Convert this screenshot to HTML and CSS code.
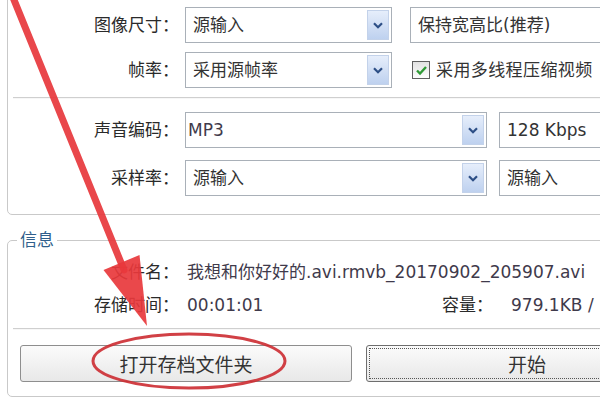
FILE: index.html
```html
<!DOCTYPE html>
<html lang="zh-CN">
<head>
	<meta charset="UTF-8">
	<meta name="viewport" content="width=device-width, initial-scale=1.0">
	<title>视频转换</title>
	<link rel="stylesheet" href="styles.css">
</head>
<body>
	<div class="window">
		<div class="group group-video">
			<div class="rows">
				<div class="row">
					<span class="label">图像尺寸：</span>
					<div class="select select-short">
						<span class="select-text">源输入</span>
						<span class="drop"><svg width="10" height="7" viewBox="0 0 10 7"><path d="M1 1.2 L5 5.2 L9 1.2" fill="none" stroke="#2d4f86" stroke-width="2.2"/></svg></span>
					</div>
					<div class="select field field-top"><span class="select-text">保持宽高比(推荐)</span></div>
				</div>
				<div class="row">
					<span class="label">帧率：</span>
					<div class="select select-short">
						<span class="select-text">采用源帧率</span>
						<span class="drop"><svg width="10" height="7" viewBox="0 0 10 7"><path d="M1 1.2 L5 5.2 L9 1.2" fill="none" stroke="#2d4f86" stroke-width="2.2"/></svg></span>
					</div>
					<label class="check">
						<span class="check-box"><svg width="13" height="11" viewBox="0 0 13 11"><path d="M2 5.5 L5 8.5 L11 2" fill="none" stroke="#2f9a36" stroke-width="2.4"/></svg></span>
						<span>采用多线程压缩视频</span>
					</label>
				</div>
			</div>
			<div class="sep"></div>
			<div class="rows rows-audio">
				<div class="row">
					<span class="label">声音编码：</span>
					<div class="select select-long">
						<span class="select-text value">MP3</span>
						<span class="drop"><svg width="10" height="7" viewBox="0 0 10 7"><path d="M1 1.2 L5 5.2 L9 1.2" fill="none" stroke="#2d4f86" stroke-width="2.2"/></svg></span>
					</div>
					<div class="select field"><span class="select-text">128 Kbps</span></div>
				</div>
				<div class="row">
					<span class="label">采样率：</span>
					<div class="select select-long">
						<span class="select-text">源输入</span>
						<span class="drop"><svg width="10" height="7" viewBox="0 0 10 7"><path d="M1 1.2 L5 5.2 L9 1.2" fill="none" stroke="#2d4f86" stroke-width="2.2"/></svg></span>
					</div>
					<div class="select field"><span class="select-text">源输入</span></div>
				</div>
			</div>
		</div>

		<fieldset class="group group-info">
			<legend>信息</legend>
			<div class="info-row">
				<span class="label">文件名：</span>
				<span class="value">我想和你好好的.avi.rmvb_20170902_205907.avi</span>
			</div>
			<div class="info-row">
				<span class="label">存储时间：</span>
				<span class="value time">00:01:01</span>
				<span class="size-label">容量：</span>
				<span class="value">979.1KB / 1.2MB</span>
			</div>
			<div class="sep sep-info"></div>
			<div class="buttons">
				<button class="btn btn-open">打开存档文件夹</button>
				<button class="btn btn-start">开始</button>
			</div>
		</fieldset>

		<!-- annotation drawn over the screenshot -->
		<svg class="marks" width="600" height="400" viewBox="0 0 600 400">
			<line x1="12" y1="-5" x2="124" y2="270" stroke="#e8383c" stroke-width="7" stroke-linecap="round" opacity="0.92"/>
			<polygon points="147,326 139.5,255 103.5,270" fill="#e8383c" opacity="0.92"/>
			<ellipse cx="189" cy="361" rx="96" ry="27" fill="none" stroke="#cc2b31" stroke-width="3" opacity="0.9"/>
		</svg>
	</div>
</body>
</html>
```

FILE: styles.css
```css
body {
	margin: 0;
	background: #fff;
	font-family: "DejaVu Sans", "Noto Sans CJK SC", sans-serif;
	font-size: 17px;
	line-height: 20px;
	color: #333;
}

.window {
	position: relative;
	width: 600px;
	height: 400px;
	overflow: hidden; /* the dialog is cropped on the right */
}

.group {
	box-sizing: border-box;
	width: 740px;
	margin-left: 7px;
	border: 1px solid #c9c9c9;
	border-radius: 5px;
}

.group-video {
	margin-top: -20px; /* top edge is outside the shot */
	padding: 26px 0 18px 0;
}

.rows {
	display: flex;
	flex-direction: column;
	gap: 9px;
}

.rows-audio {
	gap: 12px;
}

.row {
	display: flex;
	align-items: center;
	height: 36px;
}

.label {
	flex: none;
	width: 171px;
	margin-right: 6px;
	text-align: right;
	color: #2a2a2a;
}

.select {
	display: flex;
	box-sizing: border-box;
	height: 36px;
	border: 1px solid #a9b0b8;
	background: #fff;
	flex: none;
}

.select-short {
	width: 207px;
}

.select-long {
	width: 302px;
}

.select-text {
	flex: 1;
	padding-left: 7px;
	line-height: 34px;
	white-space: nowrap;
}

.drop {
	display: flex;
	align-items: center;
	justify-content: center;
	width: 20px;
	margin: 2px;
	border: 1px solid #c3d2ea;
	background: linear-gradient(#e6eefb, #bed1ef);
}

.field {
	width: 260px;
	margin-left: 12px;
}

.field-top {
	margin-left: 18px;
}

.check {
	display: flex;
	align-items: center;
	gap: 6px;
	margin-left: 20px;
	white-space: nowrap;
	letter-spacing: 0.4px;
}

.check-box {
	display: flex;
	align-items: center;
	justify-content: center;
	box-sizing: border-box;
	width: 18px;
	height: 18px;
	border: 1px solid #5f5f5f;
	background: linear-gradient(#e2e2e2, #fdfdfd);
}

.sep {
	height: 1px;
	margin: 9px 0 13px 5px;
	background: #cfcfcf;
	border-bottom: 1px solid #f7f7f7;
}

.group-info {
	margin-top: 15px;
	padding: 5px 0 14px 0;
	min-width: 0;
}

.group-info legend {
	margin-left: 9px;
	padding: 0 3px;
	color: #2f5f8c;
	line-height: 20px;
}

.info-row {
	display: flex;
	align-items: center;
	height: 33px;
	white-space: nowrap;
}

.value {
	padding-left: 2px;
	color: #3f3a4b;
}

.time {
	width: 255px;
}

.size-label {
	margin-right: 16px;
	color: #2a2a2a;
}

.sep-info {
	margin: 7px 0 15px 5px;
}

.buttons {
	display: flex;
	gap: 14px;
	padding-left: 12px;
}

.btn {
	height: 37px;
	border: 1px solid #8e8e8e;
	border-radius: 3px;
	background: linear-gradient(#fbfbfb, #e8e8e8);
	font-family: "Noto Sans CJK SC", sans-serif;
	font-size: 19px;
	color: #333;
}

.btn-open {
	width: 332px;
}

.btn-start {
	width: 322px;
	border-color: #6e6e6e;
	outline: 1px dotted #555; /* focus rectangle */
	outline-offset: -4px;
}

.marks {
	position: absolute;
	left: 0;
	top: 0;
}
```
